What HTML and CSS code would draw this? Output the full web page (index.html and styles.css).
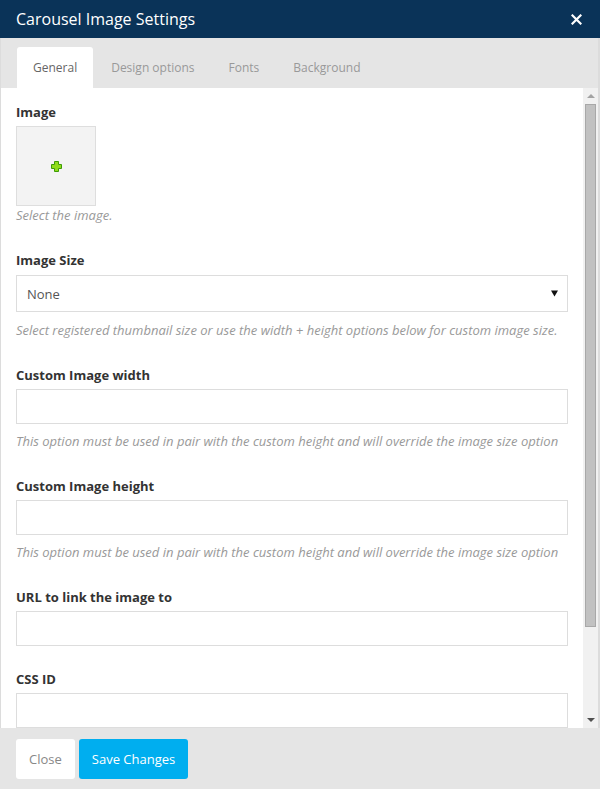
FILE: index.html
```html
<!DOCTYPE html>
<html>
<head>
<meta charset="utf-8">
<link rel="stylesheet" href="styles.css">
</head>
<body>
<div class="modal">
  <div class="header">
    <div class="title">Carousel Image Settings</div>
    <div class="close-x">
      <svg width="11" height="11" viewBox="0 0 11 11"><path d="M1.5 1.5 L9.5 9.5 M9.5 1.5 L1.5 9.5" stroke="#fff" stroke-width="2.2" stroke-linecap="square"/></svg>
    </div>
  </div>
  <div class="tabs">
    <div class="tab active">General</div>
    <div class="tab">Design options</div>
    <div class="tab">Fonts</div>
    <div class="tab">Background</div>
  </div>
  <div class="body">
    <div class="content">
      <div class="field">
        <label class="label">Image</label>
        <div class="img-box">
          <svg width="11" height="11" viewBox="0 0 11 11"><path d="M3.5 0.5 H7.5 V3.5 H10.5 V7.5 H7.5 V10.5 H3.5 V7.5 H0.5 V3.5 H3.5 Z" fill="#8fdc1a" stroke="#3c9b06" stroke-width="1"/></svg>
        </div>
        <div class="help tight">Select the image.</div>
      </div>
      <div class="field">
        <label class="label">Image Size</label>
        <div class="select">
          <span>None</span>
          <svg width="7" height="7" viewBox="0 0 7 7"><path d="M0 0.5 H7 L3.5 6.5 Z" fill="#111"/></svg>
        </div>
        <div class="help">Select registered thumbnail size or use the width + height options below for custom image size.</div>
      </div>
      <div class="field">
        <label class="label">Custom Image width</label>
        <div class="input"></div>
        <div class="help">This option must be used in pair with the custom height and will override the image size option</div>
      </div>
      <div class="field">
        <label class="label">Custom Image height</label>
        <div class="input"></div>
        <div class="help">This option must be used in pair with the custom height and will override the image size option</div>
      </div>
      <div class="field nohelp">
        <label class="label">URL to link the image to</label>
        <div class="input"></div>
      </div>
      <div class="field nohelp">
        <label class="label">CSS ID</label>
        <div class="input"></div>
      </div>
    </div>
    <div class="scrollbar">
      <div class="arrow up"></div>
      <div class="track"><div class="thumb"></div></div>
      <div class="arrow down"></div>
    </div>
  </div>
  <div class="footer">
    <button class="btn btn-close">Close</button>
    <button class="btn btn-save">Save Changes</button>
  </div>
</div>
</body>
</html>
```
FILE: styles.css
```css
* { box-sizing: border-box; }
html, body { margin: 0; padding: 0; }
body {
  font-family: "Open Sans", "Noto Sans", sans-serif;
  background: #fff;
  width: 600px;
  height: 789px;
  overflow: hidden;
}
.modal {
  width: 600px;
  height: 789px;
  display: flex;
  flex-direction: column;
}
.header {
  height: 38px;
  background: #0a3358;
  display: flex;
  align-items: center;
  justify-content: space-between;
  padding: 0 18px 0 16px;
}
.title {
  color: #fff;
  font-size: 16px;
  line-height: 20px;
  margin-top: -1px;
}
.close-x { display: flex; align-items: center; }
.tabs {
  height: 50px;
  background: #e5e5e5;
  display: flex;
  align-items: flex-end;
  gap: 2px;
  padding-left: 16px;
  border-left: 1px solid #dcdcdc;
  border-right: 2px solid #dcdcdc;
}
.tab {
  height: 41px;
  padding: 0 16px;
  font-size: 12px;
  line-height: 41px;
  color: #999;
  border-radius: 3px 3px 0 0;
}
.tab.active {
  background: #fff;
  color: #666;
}
.body {
  height: 640px;
  display: flex;
  border-left: 1px solid #dcdcdc;
  border-right: 2px solid #dcdcdc;
  background: #fff;
}
.content {
  flex: 1;
  overflow: hidden;
  padding: 15px 15px 0 15px;
}
.field {
  display: flex;
  flex-direction: column;
  align-items: stretch;
  margin-bottom: 27px;
}
.field.nohelp { margin-bottom: 24px; }
.label {
  display: block;
  font-size: 13px;
  font-weight: 700;
  line-height: 18px;
  color: #333;
  margin-bottom: 5px;
}
.img-box {
  width: 80px;
  height: 80px;
  background: #f3f3f3;
  border: 1px solid #dedede;
  display: flex;
  align-items: center;
  justify-content: center;
}
.help {
  font-size: 13px;
  font-style: italic;
  color: #999;
  line-height: 18px;
  margin-top: 8px;
  white-space: nowrap;
}
.help.tight { margin-top: 0; }
.select {
  height: 37px;
  margin-top: 1px;
  margin-bottom: 1px;
  border: 1px solid #ddd;
  display: flex;
  align-items: center;
  justify-content: space-between;
  padding: 0 9px 0 10px;
  font-size: 13px;
  color: #555;
}
.input {
  height: 35px;
  border: 1px solid #ddd;
  background: #fff;
}
.scrollbar {
  width: 15px;
  background: #f1f1f1;
  display: flex;
  flex-direction: column;
}
.arrow {
  height: 16px;
  display: flex;
  align-items: center;
  justify-content: center;
}
.arrow.up::before {
  content: "";
  border-left: 4px solid transparent;
  border-right: 4px solid transparent;
  border-bottom: 4px solid #a3a3a3;
}
.arrow.down::before {
  content: "";
  border-left: 4px solid transparent;
  border-right: 4px solid transparent;
  border-top: 4px solid #505050;
}
.track {
  flex: 1;
  padding: 0 2px;
}
.thumb {
  height: 523px;
  background: #c1c1c1;
  border: 1px solid #a8a8a8;
}
.footer {
  flex: 1;
  background: #e5e5e5;
  display: flex;
  align-items: flex-start;
  gap: 4px;
  padding: 11px 16px 0 16px;
}
.btn {
  font-family: "Open Sans", "Noto Sans", sans-serif;
  font-size: 13px;
  height: 40px;
  border: none;
  border-radius: 3px;
  padding: 0 13px;
  cursor: pointer;
}
.btn-close {
  background: #fff;
  color: #888;
}
.btn-save {
  background: #00aeef;
  color: #fff;
}
```
